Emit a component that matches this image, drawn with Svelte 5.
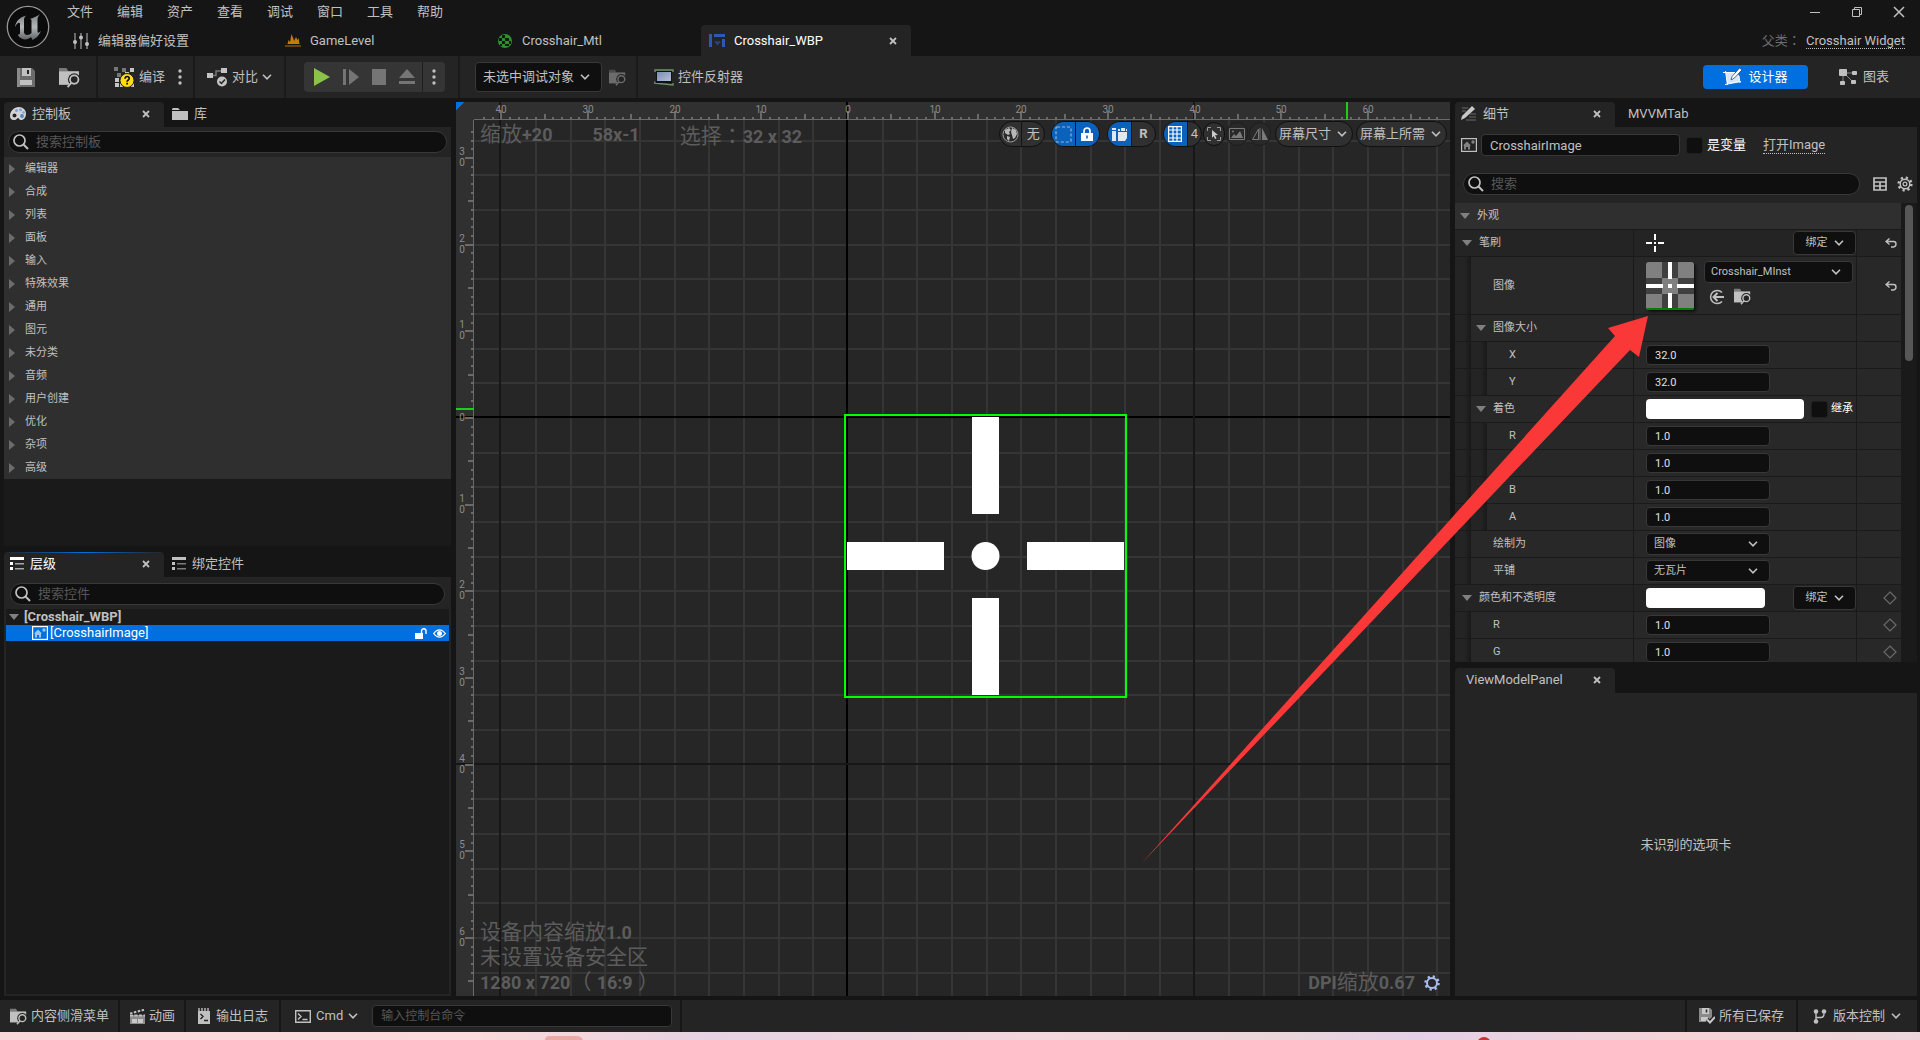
<script>
    const menus = ['文件', '编辑', '资产', '查看', '调试', '窗口', '工具', '帮助'];

    const categories = [
        '编辑器', '合成', '列表', '面板', '输入', '特殊效果', '通用',
        '图元', '未分类', '音频', '用户创建', '优化', '杂项', '高级',
    ];

    const props = [
        { id: 'brush', label: '笔刷', depth: 0, arrow: true, kind: 'brush', bind: true, reset: 'undo' },
        { id: 'image', label: '图像', depth: 1, kind: 'asset', reset: 'undo' },
        { id: 'size', label: '图像大小', depth: 1, arrow: true },
        { id: 'size-x', label: 'X', depth: 2, kind: 'number', value: '32.0' },
        { id: 'size-y', label: 'Y', depth: 2, kind: 'number', value: '32.0' },
        { id: 'tint', label: '着色', depth: 1, arrow: true, kind: 'tint' },
        { id: 'tint-r', label: 'R', depth: 2, kind: 'number', value: '1.0' },
        { id: 'tint-g', label: 'G', depth: 2, kind: 'number', value: '1.0' },
        { id: 'tint-b', label: 'B', depth: 2, kind: 'number', value: '1.0' },
        { id: 'tint-a', label: 'A', depth: 2, kind: 'number', value: '1.0' },
        { id: 'draw-as', label: '绘制为', depth: 1, kind: 'select', value: '图像' },
        { id: 'tiling', label: '平铺', depth: 1, kind: 'select', value: '无瓦片' },
        { id: 'color', label: '颜色和不透明度', depth: 0, arrow: true, kind: 'color', bind: true, reset: 'key' },
        { id: 'color-r', label: 'R', depth: 1, kind: 'number', value: '1.0', reset: 'key' },
        { id: 'color-g', label: 'G', depth: 1, kind: 'number', value: '1.0', reset: 'key' },
    ];

    // designer canvas: origin and pixels per slate unit
    const ox = 391;
    const oy = 315;
    const unit = 26 / 3;
    const majors = [-40, 0, 40, 80, 120];

    let viewWidth = 0;
    let viewHeight = 0;

    function range(from, to) {
        return Array.from({ length: Math.max(0, to - from + 1) }, (_, i) => from + i);
    }

    function tickLength(n) {
        if (n % 10 === 0) return 8;
        return n % 5 === 0 ? 5 : 2;
    }

    const px = (origin, n) => Math.round(origin + n * unit);

    // only what fits between the ruler corner and the far edge
    function ticks(origin, size) {
        const first = Math.ceil((24 - origin) / unit);
        const last = Math.floor((size - 8 - origin) / unit);
        return range(first, last).map((n) => ({ n, at: px(origin, n) + 1, len: tickLength(n) }));
    }

    function gridLines(origin, size) {
        const first = Math.ceil((18 - origin) / unit / 4);
        const last = Math.floor((size - origin) / unit / 4);
        return range(first, last).filter((n) => n % 10 !== 0).map((n) => px(origin, n * 4));
    }

    $: hTicks = ticks(ox, viewWidth);
    $: vTicks = ticks(oy, viewHeight);
    $: vLines = gridLines(ox, viewWidth);
    $: hLines = gridLines(oy, viewHeight);
</script>

{#snippet chevron()}
    <svg class="chevron" width="10" height="6" viewBox="0 0 10 6"><path d="M1 .8l4 4 4-4" fill="none" stroke="currentColor" stroke-width="1.6" /></svg>
{/snippet}

{#snippet cross()}
    <svg width="8" height="8" viewBox="0 0 8 8"><path d="M1 1l6 6M7 1L1 7" stroke="currentColor" stroke-width="1.8" /></svg>
{/snippet}

{#snippet magnifier()}
    <svg width="16" height="16" viewBox="0 0 16 16"><circle cx="6.5" cy="6.5" r="5.5" fill="none" stroke="currentColor" stroke-width="1.7" /><path d="M10.5 10.5l4.5 4.5" stroke="currentColor" stroke-width="2" /></svg>
{/snippet}

{#snippet browse(size)}
    <svg width={size} height={size} viewBox="0 0 20 20">
        <path d="M0 1h7l2 3H0z" fill="currentColor" opacity=".55" />
        <path d="M0 4h19v13H0z" fill="currentColor" />
        <circle cx="14.500" cy="12" r="6" fill="#242424" />
        <path d="M14 12h6v8H7z" fill="#242424" />
        <circle cx="14.500" cy="12" r="4" fill="none" stroke="currentColor" stroke-width="1.700" />
        <path d="M11.800 15l-3.600 4.200" stroke="currentColor" stroke-width="1.800" />
    </svg>
{/snippet}

{#snippet dots()}
    <svg width="4" height="16" viewBox="0 0 4 16" fill="currentColor"><circle cx="2" cy="2" r="1.7" /><circle cx="2" cy="8" r="1.7" /><circle cx="2" cy="14" r="1.7" /></svg>
{/snippet}

{#snippet imageIcon()}
    <svg width="16" height="14" viewBox="0 0 16 14">
        <rect x=".6" y=".6" width="14.8" height="12.8" fill="none" stroke="currentColor" stroke-width="1.2" />
        <path d="M2 7.500l4-4 4 4H9v4H7V9H5v2.500H3v-4z" fill="currentColor" opacity=".6" />
        <circle cx="12" cy="4" r="1.7" fill="currentColor" opacity=".6" />
    </svg>
{/snippet}

{#snippet listIcon()}
    <svg width="14" height="13" viewBox="0 0 14 13">
        <path d="M0 0h14v3H0zM0 5h3v3H0zM0 10h3v3H0z" fill="currentColor" />
        <path d="M5 6h9v1.5H5zM5 11h9v1.5H5z" fill="currentColor" opacity=".6" />
    </svg>
{/snippet}

{#snippet gear(size)}
    <svg width={size} height={size} viewBox="0 0 16 16" fill="none" stroke="currentColor">
        <circle cx="8" cy="8" r="6.4" stroke-width="2.4" stroke-dasharray="2.2 2.83" />
        <circle cx="8" cy="8" r="4.8" stroke-width="1.5" />
        <circle cx="8" cy="8" r="1.9" stroke-width="1.2" />
    </svg>
{/snippet}

{#snippet down()}
    <svg width="10" height="6" viewBox="0 0 10 6"><path d="M0 0h10L5 6z" fill="#808080" /></svg>
{/snippet}

<div class="editor">
    <header>
        <svg class="logo" width="44" height="44" viewBox="0 0 44 44">
            <defs>
                <linearGradient id="metal" x1="0" y1="0" x2="0" y2="1">
                    <stop offset="0" stop-color="#7b8184" />
                    <stop offset=".5" stop-color="#b4b8ba" />
                    <stop offset="1" stop-color="#5d6265" />
                </linearGradient>
            </defs>
            <circle cx="22" cy="22" r="20.7" fill="#0b0b0b" stroke="#969696" stroke-width="1.3" />
            <path d="M9 22C10 16 14 12 20.500 10.500 18.500 12 18 13 18 15v12c0 2 1.500 3 3 3 2 0 3.500-1 4.500-2V16c0-1.500-.5-2-2-2 3.500-1 7.500-2.500 10.500-5-2 2.500-2.500 4-2.500 6v11c0 1.500.5 2 1.500 1.500l2-1.500c-2 4.500-5 7.500-8.500 9L25 32c-1.500 1.500-3.500 2.500-6 2.500-4-.5-7-3-7-5 1.500.3 2-.5 2-1.500v-9c0-1.500-1-1.500-2-1-1.200.7-2 2-3 4z" fill="url(#metal)" />
        </svg>

        <div class="header-rows">
            <div class="menu-row">
                <nav>
                    {#each menus as m}
                        <button>{m}</button>
                    {/each}
                </nav>
                <div class="window-controls">
                    <button aria-label="最小化"><svg width="12" height="12" viewBox="0 0 12 12"><path d="M1 6.5h10" stroke="currentColor" /></svg></button>
                    <button aria-label="还原"><svg width="12" height="12" viewBox="0 0 12 12" fill="none" stroke="currentColor"><path d="M1.5 3.5h7v7h-7zM3.5 3.5v-2h7v7h-2" /></svg></button>
                    <button aria-label="关闭"><svg width="12" height="12" viewBox="0 0 12 12"><path d="M1 1l10 10M11 1L1 11" stroke="currentColor" stroke-width="1.5" /></svg></button>
                </div>
            </div>

            <div class="doc-row">
                <div class="doc-tab">
                    <svg width="16" height="16" viewBox="0 0 16 16" fill="currentColor"><path d="M1.5 0h1v16h-1zM7.5 0h1v16h-1zM13.5 0h1v16h-1z" /><circle cx="2" cy="9" r="2" /><circle cx="8" cy="4.5" r="2" /><circle cx="14" cy="11" r="2" /></svg>
                    编辑器偏好设置
                </div>
                <div class="doc-tab">
                    <svg width="16" height="14" viewBox="0 0 16 14"><path d="M2.500 10l1-4 1.500 2 1.500-8 2 5 .5 2 2-4 1.500 3 1-2 1 6z" fill="#c87a08" /><path d="M0 11h16v2H0z" fill="#6a4209" /></svg>
                    GameLevel
                </div>
                <div class="doc-tab">
                    <svg width="16" height="16" viewBox="0 0 16 16"><circle cx="8" cy="8" r="7" fill="#2f8f2f" /><path d="M5 2h3v3H5zM8 5h4v3H8zM2 5h3v3H2zM5 8h3v3H5zM12 8h2v3h-2zM8 11h4v2H8zM3 11h2v2H3z" fill="#0b1d0b" /></svg>
                    Crosshair_Mtl
                </div>
                <div class="doc-tab current">
                    <svg width="16" height="14" viewBox="0 0 16 14" fill="#2b59b8"><path d="M0 0h3v13H0zM5 0h11v3H5zM13 5h3v8h-3z" /><path d="M8.500 11.500l-3-3.200q.6-2 3-.6 2.400-1.400 3 .6z" opacity=".6" /></svg>
                    Crosshair_WBP
                    <button class="close" aria-label="关闭标签">{@render cross()}</button>
                </div>
                <p class="parent">父类<span class="colon">：</span> <a href="#parent">Crosshair Widget</a></p>
            </div>
        </div>
    </header>

    <div class="toolbar">
        <div class="tools save">
            <button aria-label="保存">
                <svg width="18" height="19" viewBox="0 0 18 19"><path d="M0 0h15l3 3v16H0z" fill="#6b6b6b" /><path d="M5 0h9v8H5z" fill="#c0c0c0" /><path d="M10 2h2v4h-2z" fill="#242424" /><path d="M3 12h12v5H3z" fill="#c0c0c0" /><path d="M0 0h3v19H0z" fill="#8a8a8a" /></svg>
            </button>
            <button aria-label="浏览">{@render browse(21)}</button>
        </div>
        <div class="tools compile">
            <button>
                <svg width="21" height="21" viewBox="0 0 21 21">
                    <path d="M0 0h4v4H0zM8 1h4v4H8zM3 6h4v4H3z" fill="#777" />
                    <path d="M16 1h4v4h-4zM11 5h4v4h-4zM1 11h4v4H1zM1 16h4v4H1zM6 16h4v4H6zM16 16h4v4h-4zM6 11h4v4H6z" fill="#c4c4c4" />
                    <circle cx="13" cy="13.500" r="7" fill="#ffdc14" stroke="#1a1a1a" />
                    <path d="M11 11.800q.2-2.300 2.200-2.300t2 2q0 1-1.200 1.700-.9.600-.9 1.600" fill="none" stroke="#111" stroke-width="1.700" /><path d="M12.200 15.800h1.800v1.800h-1.800z" fill="#111" />
                </svg>
                编译
            </button>
            <button aria-label="编译选项">{@render dots()}</button>
        </div>
        <div class="tools diff">
            <button>
                <svg width="21" height="19" viewBox="0 0 21 19">
                    <path d="M5 7.500h4V3h6" fill="none" stroke="#777" stroke-width="1.500" /><path d="M0 5h6v5H0zM14 0h6v5h-6z" fill="#c4c4c4" />
                    <circle cx="15" cy="13.500" r="5" fill="#c4c4c4" /><path d="M12.500 13.500l2 2 3.500-4" fill="none" stroke="#222" stroke-width="1.500" />
                </svg>
                对比
                {@render chevron()}
            </button>
        </div>
        <div class="tools sim">
            <div class="play-group">
                <button aria-label="播放"><svg width="16" height="18" viewBox="0 0 16 18"><path d="M0 0l16 9-16 9z" fill="#8bc24a" /></svg></button>
                <button aria-label="步进" disabled><svg width="16" height="16" viewBox="0 0 16 16"><path d="M0 0h3v16H0zM6 0l10 8-10 8z" fill="#757575" /></svg></button>
                <button aria-label="停止" disabled><svg width="14" height="16" viewBox="0 0 14 16"><path d="M0 0h14v16H0z" fill="#757575" /></svg></button>
                <button aria-label="弹出" disabled><svg width="16" height="16" viewBox="0 0 16 16"><path d="M8 0l8 9H0zM0 12h16v3H0z" fill="#757575" /></svg></button>
                <button class="more" aria-label="播放选项">{@render dots()}</button>
            </div>
        </div>
        <div class="tools debug">
            <label class="combo">
                <select aria-label="调试对象"><option>未选中调试对象</option></select>
                {@render chevron()}
            </label>
            <button class="dim" aria-label="浏览调试对象">{@render browse(17)}</button>
        </div>
        <div class="tools reflector">
            <button>
                <svg width="20" height="17" viewBox="0 0 20 17">
                    <defs><linearGradient id="screen" x1="0" y1="0" x2="1" y2="1"><stop offset="0" stop-color="#7d8db5" /><stop offset="1" stop-color="#b6bfd8" /></linearGradient></defs>
                    <path d="M1 3V1h18v2M0 12v2l19 2v-2" fill="none" stroke="#6d9468" stroke-width="1.300" /><path d="M2 2h16v12H2z" fill="#111" /><path d="M3 3h14v9H3z" fill="url(#screen)" />
                </svg>
                控件反射器
            </button>
        </div>
        <div class="modes">
            <button class="designer">
                <svg width="20" height="18" viewBox="0 0 20 18"><path d="M3 5h10l3 2v7L4 16z" fill="#dbe7f6" /><path d="M0 4.500h12M2.500 3l2 14M2 16.500l16-3M16 8l1 7" fill="none" stroke="#fff" /><path d="M8 12l1-3.500L16.500 0 19 1.800 11.500 10z" fill="#fff" stroke="#16385e" stroke-width=".7" /></svg>
                设计器
            </button>
            <button>
                <svg width="19" height="17" viewBox="0 0 19 17" fill="#c0c0c0"><path d="M4 4h12M4 3v11M5 4l10 10" stroke="#858585" /><rect width="8" height="7" rx="1" /><rect x="13" y="2" width="5" height="4" rx="1" /><rect x="1" y="12" width="5" height="4" rx="1" /><rect x="12" y="11" width="5" height="4" rx="1" /></svg>
                图表
            </button>
        </div>
    </div>

    <main>
        <div class="side left">
            <section class="panel">
                <div class="tabs">
                    <div class="tab active">
                        <svg width="16" height="14" viewBox="0 0 16 14"><path d="M9 0c4 0 7 3 7 6.500 0 4-2 6.500-5 6.500-2 0-2-2-3-2s-1 2-4 2c-3 0-4-2-4-4C0 4 4 0 9 0z" fill="#d4d4d4" /><circle cx="4.500" cy="8.500" r="2" fill="#242424" /><circle cx="6.500" cy="3.500" r="1.500" fill="#7aa6d6" /><circle cx="10.500" cy="2.800" r="1.500" fill="#7aa6d6" /><circle cx="13.500" cy="5.500" r="1.300" fill="#7aa6d6" /><circle cx="12" cy="9" r="1.900" fill="#4f86c6" /></svg>
                        控制板
                        <button class="close" aria-label="关闭标签">{@render cross()}</button>
                    </div>
                    <div class="tab">
                        <svg width="16" height="12" viewBox="0 0 16 12"><path d="M0 3h16v9H0z" fill="#c0c0c0" /><path d="M0 2V1l1-1h5l2 2z" fill="#c0c0c0" /></svg>
                        库
                    </div>
                </div>
                <div class="panel-body">
                    <label class="search palette-search">{@render magnifier()}<input type="text" placeholder="搜索控制板" aria-label="搜索控制板" /></label>
                    <div class="recess">
                        {#each categories as c}
                            <button class="category"><svg width="6" height="10" viewBox="0 0 6 10"><path d="M0 0l6 5-6 5z" fill="#6c6c6c" /></svg>{c}</button>
                        {/each}
                    </div>
                </div>
            </section>

            <section class="panel">
                <div class="tabs">
                    <div class="tab active focused">
                        {@render listIcon()}
                        层级
                        <button class="close" aria-label="关闭标签">{@render cross()}</button>
                    </div>
                    <div class="tab">{@render listIcon()}绑定控件</div>
                </div>
                <div class="panel-body">
                    <label class="search tree-search">{@render magnifier()}<input type="text" placeholder="搜索控件" aria-label="搜索控件" /></label>
                    <div class="recess tree">
                        <div class="tree-row root">{@render down()}[Crosshair_WBP]</div>
                        <div class="tree-row selected">
                            {@render imageIcon()}
                            <span>[CrosshairImage]</span>
                            <button aria-label="锁定"><svg width="12" height="11" viewBox="0 0 12 11"><path d="M0 5h8v6H0z" fill="#fff" /><path d="M6.500 5V3a2.200 2.200 0 0 1 4.500 0v3" fill="none" stroke="#fff" stroke-width="1.400" /></svg></button>
                            <button aria-label="可视性"><svg width="13" height="9" viewBox="0 0 13 9"><path d="M.6 4.500q5.900-7.400 11.800 0-5.900 7.400-11.800 0z" fill="none" stroke="#fff" stroke-width="1.200" /><circle cx="6.500" cy="4.500" r="2.500" fill="#fff" /></svg></button>
                        </div>
                    </div>
                </div>
            </section>
        </div>

        <div class="designer-view" bind:clientWidth={viewWidth} bind:clientHeight={viewHeight}>
            <svg class="surface" width="100%" height="100%">
                <g fill="#353535">
                    {#each vLines as x}<rect {x} y="0" width="2" height="100%" />{/each}
                    {#each hLines as y}<rect x="0" {y} width="100%" height="2" />{/each}
                </g>
                <rect width="100%" height="17" fill="#303030" />
                <rect width="18" height="100%" fill="#303030" />
                {#each majors as n}
                    <rect x={px(ox, n) - 1} y="0" width="2" height="100%" fill={n ? '#171717' : '#000'} />
                    <rect x="0" y={px(oy, n) - 1} width="100%" height="2" fill={n ? '#171717' : '#000'} />
                {/each}
                <g fill="#6a6a6a">
                    <rect x="18" y="17" width="100%" height="1" />
                    <rect x="17" y="18" width="1" height="100%" />
                    {#each hTicks as t}<rect x={t.at - 1} y={17 - t.len} width="2" height={t.len} />{/each}
                    {#each vTicks as t}<rect x={17 - t.len} y={t.at - 1} width={t.len} height="2" />{/each}
                </g>
                <g class="ruler-text">
                    {#each hTicks.filter((t) => t.n % 10 === 0) as t}
                        <text x={t.at} y="11">{Math.abs(t.n)}</text>
                    {/each}
                    {#each vTicks.filter((t) => t.n % 10 === 0) as t}
                        {#if t.n === 0}
                            <text x="6" y={t.at + 3}>0</text>
                        {:else}
                            <text x="6" y={t.at - 3}>{String(Math.abs(t.n))[0]}<tspan x="6" dy="11">0</tspan></text>
                        {/if}
                    {/each}
                </g>
                <path d="M0 0h8l-8 8z" fill="#0070e0" />
                <rect x="890" y="0" width="2" height="18" fill="#17d017" />
                <rect x="0" y="306" width="18" height="2" fill="#17d017" />
                <g fill="#fff">
                    <rect x="516" y="315" width="27" height="97" />
                    <rect x="516" y="496" width="27" height="97" />
                    <rect x="391" y="440" width="97" height="28" />
                    <rect x="571" y="440" width="97" height="28" />
                    <circle class="smooth" cx="529.500" cy="454" r="14" />
                </g>
                <rect x="389" y="313" width="281" height="282" fill="none" stroke="#00ff00" stroke-width="2" />
            </svg>

            <div class="readout top">
                <span>缩放<b>+20</b></span>
                <b>58x-1</b>
                <span>选择<span class="colon">：</span><b>32 x 32</b></span>
            </div>

            <div class="view-tools">
                <div class="pill">
                    <button aria-label="本地化"><svg width="17" height="17" viewBox="0 0 17 17"><circle cx="8.500" cy="8.500" r="7.500" fill="#2a2a2a" stroke="#a0a0a0" /><path d="M3 4l4-2 2 2-2 2 1 2-2 1-3-2zM5 10l3 1-1 4-2-2zM10 2l4 2 1 4-2 4-2 1-1-4-1-3z" fill="#b8b8b8" /></svg></button>
                    <button>无</button>
                </div>
                <div class="pill wide">
                    <button class="on" aria-label="虚线轮廓"><svg width="17" height="17" viewBox="0 0 17 17"><rect x="1" y="1" width="15" height="15" rx="1" fill="none" stroke="#9db3cc" stroke-width="1.200" stroke-dasharray="3 2" /></svg></button>
                    <button class="on" aria-label="遵从锁定"><svg width="12" height="14" viewBox="0 0 12 14"><path d="M0 6h12v8H0z" fill="#fff" /><path d="M3 6V4a3 3 0 0 1 6 0v2" fill="none" stroke="#fff" stroke-width="1.700" /><path d="M5.200 8.500h1.600v3H5.200z" fill="#0b62bd" /></svg></button>
                </div>
                <div class="pill wide">
                    <button class="on" aria-label="布局变换"><svg width="15" height="13" viewBox="0 0 15 13" fill="#e0e8f0"><path d="M0 0h4v2H0zM0 3h4v10H0zM6 4h9v6l-2 3H6zM6 1h2v2H6zM9 0h4v3H9zM14 1h1v2h-1z" /></svg></button>
                    <button><b>R</b></button>
                </div>
                <div class="pill grid">
                    <button class="on" aria-label="网格对齐"><svg width="14" height="16" viewBox="0 0 14 16"><path d="M.6.600h12.800v14.800H.6zM5 0v16M9 0v16M0 4h14M0 8h14M0 12h14" fill="none" stroke="#fff" stroke-width="1.200" /></svg></button>
                    <button>4</button>
                </div>
                <button class="round" aria-label="缩放到合适"><svg width="14" height="14" viewBox="0 0 14 14"><path d="M.5 4V.5H4M10 .5h3.500V4M13.500 10v3.500H10M4 13.500H.5V10" fill="none" stroke="#999" /><path d="M5 3l6 5-3 .3 1.500 3-1.500.7-1.300-3L5 11z" fill="#ccc" /></svg></button>
                <button class="round faint" aria-label="背景图片"><svg width="16" height="12" viewBox="0 0 16 12"><path d="M.5.500h15v11H.5z" fill="none" stroke="#7a7a7a" /><path d="M2 10l3-4 2 2 4-5 3 7z" fill="#7a7a7a" /><circle cx="4" cy="3.500" r="1" fill="#7a7a7a" /></svg></button>
                <button class="round faint" aria-label="翻转"><svg width="16" height="12" viewBox="0 0 16 12"><path d="M6.500 1v10.500h-6zM8 0v12" fill="none" stroke="#7a7a7a" /><path d="M10 0l6 12h-6z" fill="#7a7a7a" /></svg></button>
                <button class="pill-text">屏幕尺寸{@render chevron()}</button>
                <button class="pill-text">屏幕上所需{@render chevron()}</button>
            </div>

            <div class="readout bottom">
                <p>设备内容缩放<b>1.0</b></p>
                <p>未设置设备安全区</p>
                <p><b>1280 x 720</b>（ <b>16:9</b> ）</p>
            </div>
            <div class="readout dpi">
                <span><b>DPI</b>缩放<b>0.67</b></span>
                <button aria-label="DPI设置">
                    <svg width="16" height="16" viewBox="0 0 16 16" fill="none" stroke="#a9bdf0"><circle cx="8" cy="8" r="6.500" stroke-width="2.500" stroke-dasharray="2.200 2.900" /><circle cx="8" cy="8" r="5" stroke-width="2" /></svg>
                </button>
            </div>
        </div>

        <div class="side right">
            <section class="panel">
                <div class="tabs">
                    <div class="tab active">
                        <svg width="16" height="15" viewBox="0 0 16 15"><path d="M1 2h6M1 5h4M9 8h6M8 11h7M5 14h10" stroke="#6a6a6a" /><path d="M1 10L11 0l3 3L4 12l-4 2z" fill="#c8c8c8" /></svg>
                        细节
                        <button class="close" aria-label="关闭标签">{@render cross()}</button>
                    </div>
                    <div class="tab">MVVMTab</div>
                </div>
                <div class="panel-body">
                    <div class="name-row">
                        {@render imageIcon()}
                        <input class="name" type="text" value="CrosshairImage" aria-label="名称" />
                        <label class="check"><input type="checkbox" />是变量</label>
                        <a href="#image">打开Image</a>
                    </div>
                    <div class="filter-row">
                        <label class="search">{@render magnifier()}<input type="text" placeholder="搜索" aria-label="搜索" /></label>
                        <button aria-label="属性矩阵"><svg width="14" height="14" viewBox="0 0 14 14"><path d="M1 1h12v12H1zM1 5h12M1 9h12M7 5v8" fill="none" stroke="currentColor" stroke-width="1.700" /></svg></button>
                        <button aria-label="设置">{@render gear(16)}</button>
                    </div>
                    <div class="details">
                        <div class="props">
                            <button class="group">{@render down()}外观</button>
                            {#each props as p}
                                <div class="prop" class:tall={p.kind === 'asset'} class:nested={p.depth > 0}>
                                    <div class="prop-name">
                                        {#each range(1, p.depth) as d}<i></i>{/each}
                                        <span class="arrow">{#if p.arrow}{@render down()}{/if}</span>
                                        <label for={p.id}>{p.label}</label>
                                    </div>
                                    <div class="prop-value">
                                        {#if p.kind === 'number'}
                                            <input id={p.id} type="text" value={p.value} />
                                        {:else if p.kind === 'select'}
                                            <div class="combo small">
                                                <select id={p.id}><option>{p.value}</option></select>
                                                {@render chevron()}
                                            </div>
                                        {:else if p.kind === 'brush'}
                                            <svg width="18" height="18" viewBox="0 0 18 18"><path d="M8 0h2v6H8zM8 12h2v6H8zM0 8h6v2H0zM12 8h6v2h-6zM8 8h2v2H8z" fill="#fff" /></svg>
                                        {:else if p.kind === 'asset'}
                                            <svg class="thumb" width="48" height="48" viewBox="0 0 48 48">
                                                <rect width="48" height="48" rx="2" fill="#404040" />
                                                <path d="M0 0h16v16H0zM32 0h16v16H32zM16 16h16v16H16zM0 32h16v16H0zM32 32h16v16H32z" fill="#808080" />
                                                <path d="M22 0h4v17h-4zM22 31h4v15h-4zM0 22h17v4H0zM31 22h17v4H31zM22 22h4v4h-4z" fill="#fff" />
                                                <path d="M0 46h48v2H0z" fill="#007f00" />
                                            </svg>
                                            <div class="asset">
                                                <div class="combo small">
                                                    <select id={p.id}><option>Crosshair_MInst</option></select>
                                                    {@render chevron()}
                                                </div>
                                                <div class="asset-tools">
                                                    <button aria-label="使用选中资产"><svg width="16" height="16" viewBox="0 0 16 16" fill="none" stroke="currentColor"><path d="M13 3.500a6.600 6.600 0 1 0 0 9" stroke-width="1.500" /><path d="M15 8H5M8.500 4L4.500 8l4 4" stroke-width="2" /></svg></button>
                                                    <button aria-label="浏览到资产">{@render browse(17)}</button>
                                                </div>
                                            </div>
                                        {:else if p.kind === 'tint'}
                                            <button id={p.id} class="swatch" aria-label="颜色"></button>
                                            <label class="check"><input type="checkbox" />继承</label>
                                        {:else if p.kind === 'color'}
                                            <button id={p.id} class="swatch short" aria-label="颜色"></button>
                                        {/if}
                                        {#if p.bind}
                                            <button class="bind">绑定{@render chevron()}</button>
                                        {/if}
                                    </div>
                                    <div class="prop-reset">
                                        {#if p.reset === 'undo'}
                                            <button aria-label="重置"><svg width="12" height="10" viewBox="0 0 12 10"><path d="M4.500.500L1 3.500l3.500 3M1 3.500h7.500q2.500 0 2.500 2.600T8.500 9H6" fill="none" stroke="currentColor" stroke-width="1.400" /></svg></button>
                                        {:else if p.reset === 'key'}
                                            <button aria-label="添加关键帧"><svg width="14" height="14" viewBox="0 0 14 14"><path d="M7 1l6 6-6 6-6-6z" fill="none" stroke="#6a6a6a" stroke-width="1.200" /></svg></button>
                                        {/if}
                                    </div>
                                </div>
                            {/each}
                        </div>
                        <div class="scrollbar"></div>
                    </div>
                </div>
            </section>

            <section class="panel">
                <div class="tabs">
                    <div class="tab active viewmodel">
                        ViewModelPanel
                        <button class="close" aria-label="关闭标签">{@render cross()}</button>
                    </div>
                </div>
                <div class="panel-body unknown">未识别的选项卡</div>
            </section>
        </div>
    </main>

    <footer>
        <button>{@render browse(17)}内容侧滑菜单</button>
        <button><svg width="15" height="15" viewBox="0 0 15 15"><path d="M0 6h15v9H0z" fill="#8a8a8a" /><path d="M2 10h5v4H2zM8 10h5v4H8z" fill="#c8c8c8" /><path d="M0 4.500L14 .8" stroke="#c0c0c0" stroke-width="2" stroke-dasharray="2.500 1.500" /><path d="M0 6.500h15" stroke="#c0c0c0" stroke-width="2" stroke-dasharray="3 1.500" /></svg>动画</button>
        <button class="log"><svg width="12" height="16" viewBox="0 0 12 16"><path d="M0 3h12v13H0z" fill="#c0c0c0" /><path d="M1 0v4M4 0v4M7 0v4M10 0v4" stroke="#c0c0c0" stroke-width="1.400" /><path d="M2.500 6l2.500 2.500L2.500 11M6 12.500h4" fill="none" stroke="#222" stroke-width="1.400" /></svg>输出日志</button>
        <div class="console">
            <button><svg width="16" height="13" viewBox="0 0 16 13"><path d="M.7.700h14.600v11.600H.7z" fill="none" stroke="currentColor" stroke-width="1.400" /><path d="M3 3.500L6 6.500 3 9.500M7.500 9.500h5" fill="none" stroke="currentColor" stroke-width="1.400" /></svg>Cmd{@render chevron()}</button>
            <input type="text" placeholder="输入控制台命令" aria-label="输入控制台命令" />
        </div>
        <span class="fill"></span>
        <button class="saved"><svg width="16" height="16" viewBox="0 0 16 16"><path d="M0 0h11l2 2v7l-5 5H0z" fill="#8a8a8a" /><path d="M3 0h7v6H3zM2 9h7v4H2z" fill="#c8c8c8" /><path d="M7.500 1.500v3" stroke="#222" stroke-width="1.500" /><path d="M8 11.500l3 3 5-5.500" fill="none" stroke="#242424" stroke-width="4" /><path d="M8 11.500l3 3 5-5.500" fill="none" stroke="#c8c8c8" stroke-width="2" /></svg>所有已保存</button>
        <button class="source"><svg width="14" height="15" viewBox="0 0 14 15" fill="#c0c0c0"><circle cx="3" cy="2.500" r="2.300" /><circle cx="11" cy="2.500" r="2.300" /><circle cx="3" cy="12.500" r="2.300" /><path d="M3 2v10M3 8.500h5q3 0 3-4" fill="none" stroke="#c0c0c0" stroke-width="1.400" /></svg>版本控制{@render chevron()}</button>
    </footer>
    <div class="desktop">
        <svg width="100%" height="8"><path d="M545 8v-1q1-3 4-3h28q4 0 6 4z" fill="#ecaaa6" /><circle cx="1484" cy="12" r="7" fill="#c8322f" /></svg>
    </div>

    <svg class="annotation" width="1920" height="1040"><path d="M1648 316l-40 12 7 8-474 528 489-514 9 7z" fill="#fb3838" /></svg>
</div>

<style>
    :global(body) {
        background: #151515;
    }

    .editor {
        position: relative;
        display: grid;
        grid-template-rows: 56px 42px minmax(0, 1fr) 32px 8px;
        height: 100vh;
        overflow: hidden;
        background: #151515;
        color: #c0c0c0;
        font: 13px/16px Roboto, "Noto Sans CJK SC", sans-serif;
        white-space: nowrap;
    }

    svg {
        display: block;
        flex: none;
    }

    p {
        margin: 0;
    }

    button, input, select {
        box-sizing: border-box;
        margin: 0;
        padding: 0;
        border: 0;
        background: none;
        color: inherit;
        font: inherit;
    }

    button {
        display: flex;
        align-items: center;
        white-space: nowrap;
    }

    input, select {
        min-width: 0;
        outline: none;
    }

    input::placeholder {
        color: #575757;
        opacity: 1;
    }

    a {
        color: inherit;
        text-decoration: none;
        border-bottom: 1px dotted #c0c0c0;
    }

    /* centred full-width colon */
    .colon {
        font-family: "Noto Sans CJK TC", sans-serif;
    }

    /* title area */
    header {
        display: flex;
        padding-left: 6px;
    }

    .logo {
        margin-top: 5px;
    }

    .header-rows {
        flex: 1;
        display: flex;
        flex-direction: column;
        justify-content: space-between;
        margin-left: 15px;
    }

    .menu-row {
        display: flex;
        justify-content: space-between;
        height: 24px;
    }

    nav {
        display: flex;
        gap: 24px;
        padding-left: 2px;
    }

    .window-controls {
        display: flex;
        gap: 30px;
        padding-right: 15px;
    }

    .doc-row {
        display: flex;
        height: 31px;
    }

    .doc-tab {
        box-sizing: border-box;
        display: flex;
        align-items: center;
        gap: 9px;
        width: 210px;
        margin-right: 2px;
        padding: 0 14px 0 8px;
    }

    .current {
        border-radius: 4px 4px 0 0;
        background: #242424;
        color: #fff;
    }

    .close {
        margin-left: auto;
        color: #c0c0c0;
    }

    .parent {
        margin-left: auto;
        padding: 7px 15px 0 0;
        color: #6e6e6e;
    }

    .parent a {
        margin-left: 2px;
        color: #c0c0c0;
    }

    /* toolbar */
    .toolbar {
        display: flex;
        background: #242424;
    }

    .tools {
        box-sizing: border-box;
        display: flex;
        align-items: center;
        border-right: 2px solid #1a1a1a;
    }

    .tools button {
        gap: 4px;
    }

    .save {
        gap: 24px;
        padding: 0 16px 0 17px;
    }

    .compile {
        gap: 13px;
        padding: 0 11px 0 16px;
    }

    .diff {
        padding: 0 12px;
    }

    .sim {
        padding: 0 13px 0 18px;
    }

    .play-group {
        display: flex;
        gap: 13px;
        height: 30px;
        padding-left: 10px;
        border-radius: 4px;
        background: #353535;
    }

    .more {
        justify-content: center;
        width: 23px;
        margin-left: -6px;
        border-left: 1px solid #1f1f1f;
    }

    .debug {
        gap: 7px;
        padding: 0 10px 0 15px;
    }

    .dim {
        color: #6c6c6c;
    }

    .reflector {
        padding-left: 16px;
        border: 0;
    }

    .combo {
        position: relative;
        display: flex;
        align-items: center;
    }

    .combo select {
        appearance: none;
        width: 127px;
        height: 30px;
        padding: 0 24px 0 7px;
        border: 1px solid #383838;
        border-radius: 4px;
        background: #0f0f0f;
    }

    .combo .chevron {
        position: absolute;
        right: 12px;
        pointer-events: none;
    }

    .modes {
        display: flex;
        align-items: center;
        gap: 31px;
        margin-left: auto;
        padding-right: 31px;
    }

    .modes button {
        gap: 5px;
    }

    .modes .designer {
        justify-content: center;
        width: 105px;
        height: 24px;
        border-radius: 4px;
        background: #0070e0;
        color: #fff;
    }

    /* panels */
    main {
        display: grid;
        grid-template-columns: minmax(0, 447fr) minmax(0, 994fr) minmax(0, 462fr);
        gap: 5px;
        padding: 4px 3px 4px 4px;
        min-height: 0;
    }

    .side {
        display: grid;
        gap: 6px;
        min-height: 0;
    }

    .left {
        grid-template-rows: minmax(0, 1fr) minmax(0, 1fr);
    }

    .right {
        grid-template-rows: minmax(0, 560fr) minmax(0, 328fr);
    }

    .panel {
        display: flex;
        flex-direction: column;
        min-height: 0;
    }

    .tabs {
        display: flex;
        flex: none;
        height: 25px;
    }

    .tab {
        box-sizing: border-box;
        display: flex;
        align-items: center;
        gap: 6px;
        min-width: 160px;
        padding: 0 14px 2px 6px;
    }

    .tab + .tab {
        padding-left: 8px;
    }

    .right .tab + .tab {
        padding-left: 13px;
    }

    .right .viewmodel {
        padding-left: 11px;
    }

    .active {
        border-radius: 4px 4px 0 0;
        background: #242424;
    }

    .focused {
        background: linear-gradient(90deg, #242424, #0070e0, #242424) top / 100% 1px no-repeat #242424;
        color: #fff;
    }

    .panel-body {
        flex: 1;
        display: flex;
        flex-direction: column;
        min-height: 0;
        background: #242424;
    }

    .search {
        box-sizing: border-box;
        display: flex;
        align-items: center;
        gap: 7px;
        height: 22px;
        padding-left: 4px;
        border: 1px solid #383838;
        border-radius: 11px;
        background: #0f0f0f;
    }

    .search input {
        flex: 1;
    }

    .palette-search {
        margin: 4px;
    }

    .tree-search {
        margin: 6px 6px 4px;
    }

    .recess {
        flex: 1;
        overflow: hidden;
        background: #1a1a1a;
    }

    .category {
        gap: 10px;
        width: 100%;
        height: 23px;
        padding-left: 5px;
        background: #2f2f2f;
        font-size: 11px;
    }

    .tree {
        margin: 0 2px 2px;
    }

    .tree-row {
        display: flex;
        align-items: center;
        gap: 5px;
        height: 16px;
        padding-left: 3px;
    }

    .root {
        font-weight: bold;
    }

    .selected {
        gap: 2px;
        padding: 0 3px 0 26px;
        background: #0070e0;
        color: #fff;
    }

    .selected span {
        flex: 1;
    }

    .selected button + button {
        margin-left: 4px;
    }

    /* designer */
    .designer-view {
        position: relative;
        overflow: hidden;
        background: #262626;
    }

    .surface {
        position: absolute;
        inset: 0;
        shape-rendering: crispEdges;
    }

    .smooth {
        shape-rendering: auto;
    }

    .ruler-text {
        fill: #8c8c8c;
        font-size: 10px;
        text-anchor: middle;
    }

    .readout {
        position: absolute;
        display: flex;
        color: #5c5c5c;
        font-size: 21px;
        line-height: 25px;
    }

    .readout b {
        font-size: 18px;
    }

    .top {
        top: 20px;
        left: 24px;
        gap: 40px;
    }

    .bottom {
        bottom: 1px;
        left: 24px;
        flex-direction: column;
    }

    .dpi {
        right: 10px;
        bottom: 1px;
        gap: 9px;
    }

    .view-tools {
        position: absolute;
        top: 19px;
        right: 3px;
        display: flex;
        align-items: center;
    }

    .pill, .round, .pill-text {
        box-sizing: border-box;
        display: flex;
        flex: none;
        height: 26px;
        border: 1px solid #101010;
        border-radius: 13px;
        background: #303030;
        overflow: hidden;
    }

    .pill {
        width: 46px;
        margin-right: 6px;
    }

    .wide {
        width: 49px;
        margin-right: 7px;
    }

    .grid {
        width: 39px;
        margin-right: 1px;
    }

    .pill button {
        flex: 1;
        justify-content: center;
    }

    .pill button + button {
        border-left: 1px solid #151515;
    }

    .grid button + button {
        flex: none;
        width: 14px;
    }

    .on {
        background: #0b62bd;
    }

    .round {
        justify-content: center;
        width: 22px;
        height: 24px;
        margin-right: 1px;
    }

    .faint {
        border-color: #1e1e1e;
        background: #292929;
    }

    .pill-text {
        gap: 6px;
        margin-left: 3px;
        padding: 0 5px 0 3px;
    }

    /* details */
    .name-row {
        display: flex;
        align-items: center;
        gap: 4px;
        padding: 7px 0 0 6px;
    }

    .name {
        width: 199px;
        height: 22px;
        padding: 0 8px;
        border: 1px solid #383838;
        border-radius: 4px;
        background: #0f0f0f;
    }

    .check {
        display: flex;
        align-items: center;
        gap: 4px;
        color: #fff;
    }

    .check input {
        appearance: none;
        width: 17px;
        height: 17px;
        border: 1px solid #1f1f1f;
        border-radius: 3px;
        background: #0f0f0f;
    }

    .name-row .check {
        margin: 0 13px 0 2px;
    }

    .filter-row {
        display: flex;
        align-items: center;
        gap: 10px;
        padding: 17px 4px 8px 8px;
    }

    .filter-row .search {
        flex: 1;
        margin-right: 3px;
    }

    .details {
        flex: 1;
        display: flex;
        gap: 4px;
        min-height: 0;
        padding-right: 4px;
        overflow: hidden;
        background: #1a1a1a;
        font-size: 11px;
    }

    .props {
        flex: 1;
    }

    .scrollbar {
        width: 8px;
        height: 156px;
        margin-top: 2px;
        border-radius: 4px;
        background: #575757;
    }

    .group {
        gap: 7px;
        width: 100%;
        height: 27px;
        padding-left: 5px;
        border-bottom: 1px solid #1a1a1a;
        background: #2f2f2f;
    }

    .prop {
        box-sizing: border-box;
        display: grid;
        grid-template-columns: minmax(0, 1fr) 222px 44px;
        gap: 1px;
        height: 27px;
        border-bottom: 1px solid #1a1a1a;
        background: #1a1a1a;
    }

    .prop > div {
        display: flex;
        align-items: center;
        background: #242424;
    }

    .nested > div {
        background: #282828;
    }

    .tall {
        height: 58px;
    }

    .prop-name i {
        align-self: stretch;
        width: 16px;
        background: linear-gradient(90deg, #242424 60%, #191919);
    }

    .arrow {
        width: 10px;
        padding: 0 7px;
    }

    .nested .arrow {
        padding-left: 5px;
    }

    .prop-value {
        gap: 7px;
        padding-left: 12px;
    }

    .prop-value > input {
        width: 124px;
        height: 20px;
        padding: 0 8px;
        border: 1px solid #383838;
        border-radius: 4px;
        background: #0f0f0f;
        color: #e0e0e0;
    }

    .small select {
        width: 124px;
        height: 22px;
        padding-left: 7px;
    }

    .asset {
        align-self: flex-start;
        margin-left: 3px;
        padding-top: 4px;
    }

    .asset select {
        width: 149px;
        padding-left: 6px;
    }

    .asset-tools {
        display: flex;
        gap: 9px;
        padding: 5px 0 0 5px;
    }

    .thumb {
        border-radius: 3px;
        box-shadow: 2px 2px 3px #111;
    }

    .swatch {
        width: 158px;
        height: 20px;
        border-radius: 4px;
        background: #fff;
    }

    .short {
        width: 119px;
    }

    .prop .check {
        gap: 3px;
    }

    .bind {
        justify-content: center;
        gap: 6px;
        width: 63px;
        height: 24px;
        margin-left: auto;
        border: 1px solid #383838;
        border-radius: 4px;
        background: #0f0f0f;
    }

    .prop-reset {
        justify-content: flex-end;
        padding-right: 4px;
    }

    .unknown {
        align-items: center;
        justify-content: center;
    }

    /* status bar */
    footer {
        display: flex;
        margin-right: 3px;
        background: #242424;
    }

    footer > button, .console {
        gap: 4px;
        padding: 0 9px 0 10px;
        border-right: 2px solid #171717;
    }

    footer > .log {
        gap: 6px;
        padding: 0 11px 0 12px;
    }

    .console {
        display: flex;
        align-items: center;
        gap: 14px;
        padding: 0 8px 0 14px;
    }

    .console button {
        gap: 5px;
    }

    .console input {
        width: 300px;
        height: 22px;
        padding: 0 8px;
        border: 1px solid #383838;
        border-radius: 4px;
        background: #0f0f0f;
        font-size: 12px;
    }

    .fill {
        flex: 1;
        border-right: 2px solid #171717;
    }

    footer > .saved {
        padding: 0 12px;
    }

    footer > .source {
        gap: 6px;
        padding: 0 16px 0 15px;
        border: 0;
    }

    .desktop {
        background: linear-gradient(90deg, #f8d8d8, #fadada 25%, #e6d2e2 37%, #f3d8dc 55%, #ead6d8 66%, #e4d0e6 74%, #f5d4d6 88%, #ecd6dc);
    }

    .annotation {
        position: absolute;
        top: 0;
        left: 0;
        pointer-events: none;
    }
</style>
